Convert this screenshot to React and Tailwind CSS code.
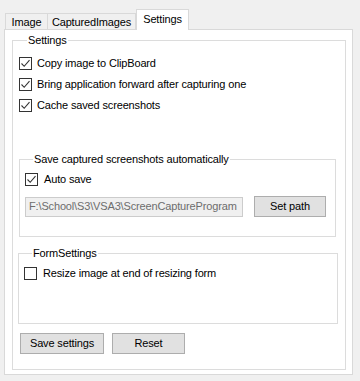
import React from "react";

function Check({ checked = false }) {
  return (
    <span className="w-[13px] h-[13px] shrink-0 border border-[#333333] bg-white flex items-center justify-center">
      {checked && (
        <svg width="11" height="11" viewBox="0 0 11 11">
          <path d="M1.5 5.5 L4.2 8.3 L9.5 2.2" fill="none" stroke="#333333" strokeWidth="1.1" />
        </svg>
      )}
    </span>
  );
}

function CheckRow({ checked, label, gap = "gap-[5px]" }) {
  return (
    <label className={`flex items-center h-[21px] ${gap}`}>
      <Check checked={checked} />
      <span>{label}</span>
    </label>
  );
}

function Group({ title, className = "", children }) {
  return (
    <fieldset className={`border border-[#dcdcdc] ${className}`}>
      <legend className="ml-[8px] px-[1px] leading-[13px]">{title}</legend>
      {children}
    </fieldset>
  );
}

export default function App() {
  return (
    <div className="w-[360px] h-[381px] bg-[#f0f0f0] pt-[9px] pl-[4px] text-[11px] tracking-[-0.15px] text-black" style={{ fontFamily: '"Liberation Sans", Arial, sans-serif' }}>
      <div className="flex items-end h-[21px] -mb-px relative z-10">
        <div className="ml-[1px] w-[43px] h-[17px] border border-b-0 border-[#d9d9d9] flex items-center justify-center">Image</div>
        <div className="w-[88px] h-[17px] border border-b-0 border-l-0 border-[#d9d9d9] flex items-center justify-center">CapturedImages</div>
        <div className="w-[53px] h-[21px] border border-b-0 border-[#d9d9d9] bg-white flex items-center justify-center pb-[2px]">Settings</div>
      </div>
      <div className="w-[349px] h-[346px] border border-[#d9d9d9] bg-white pl-[7px] pt-[4px]">
        <Group title="Settings" className="w-[332px] h-[336px] pl-[6px] pr-[7px]">
          <div className="pt-[6px]">
            <CheckRow checked label="Copy image to ClipBoard" />
            <CheckRow checked label="Bring application forward after capturing one" />
            <CheckRow checked label="Cache saved screenshots" />
          </div>
          <Group title="Save captured screenshots automatically" className="mt-[37px] w-[317px] h-[84px] pl-[5px]">
            <div className="pt-[3px]">
              <CheckRow checked label="Auto save" gap="gap-[6px]" />
              <div className="flex items-center mt-[6px]">
                <div className="w-[218px] h-[20px] border border-[#cccccc] bg-[#f0f0f0] text-[#6d6d6d] px-[3px] flex items-center overflow-hidden whitespace-nowrap">
                  F:\School\S3\VSA3\ScreenCaptureProgram
                </div>
                <button className="ml-[11px] w-[72px] h-[21px] border border-[#adadad] bg-[#e1e1e1]">Set path</button>
              </div>
            </div>
          </Group>
          <Group title="FormSettings" className="mt-[10px] -ml-px w-[320px] h-[77px] pl-[5px]">
            <div className="pt-[3px]">
              <CheckRow label="Resize image at end of resizing form" gap="gap-[6px]" />
            </div>
          </Group>
          <div className="flex gap-[8px] mt-[9px] ml-[1px]">
            <button className="w-[84px] h-[21px] border border-[#adadad] bg-[#e1e1e1]">Save settings</button>
            <button className="w-[73px] h-[21px] border border-[#adadad] bg-[#e1e1e1]">Reset</button>
          </div>
        </Group>
      </div>
    </div>
  );
}
